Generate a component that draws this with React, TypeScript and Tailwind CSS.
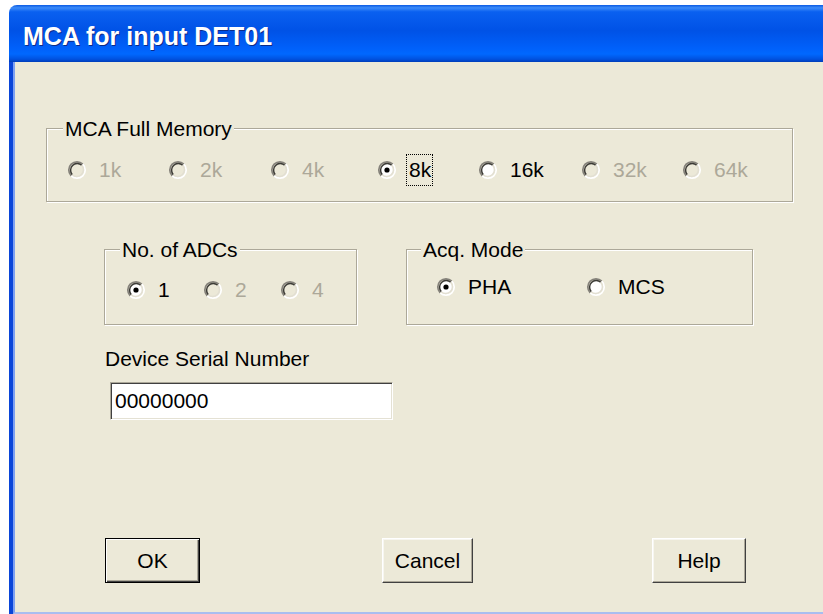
import React from "react";

type Opt = {
  label: string;
  w: string;
  checked?: boolean;
  disabled?: boolean;
  focus?: boolean;
};

// Classic sunken radio: dark bevel on the upper-left, light bevel on the lower-right.
function Radio({ checked = false, disabled = false }: { checked?: boolean; disabled?: boolean }) {
  const fill = disabled ? "#ece9d8" : "#ffffff";
  return (
    <span className="block w-[20px] h-[20px] shrink-0">
      <svg viewBox="0 0 20 20" className="block w-[20px] h-[20px] max-w-none">
        <circle cx="10" cy="10" r="6.6" fill={fill} />
        <path d="M4.2 15.8 A8.2 8.2 0 0 1 15.8 4.2" fill="none" stroke="#85827a" strokeWidth="1.7" />
        <path d="M15.8 4.2 A8.2 8.2 0 0 1 4.2 15.8" fill="none" stroke="#ffffff" strokeWidth="1.7" />
        <path d="M5.27 14.73 A6.7 6.7 0 0 1 14.73 5.27" fill="none" stroke="#3c3b36" strokeWidth="1.5" />
        <path d="M14.73 5.27 A6.7 6.7 0 0 1 5.27 14.73" fill="none" stroke="#e2dfd2" strokeWidth="1.5" />
        {checked && <circle cx="10" cy="10" r="2.6" fill="#000000" />}
      </svg>
    </span>
  );
}

function RadioItem({ o }: { o: Opt }) {
  return (
    <div className={`flex items-center ${o.w}`}>
      <Radio checked={o.checked} disabled={o.disabled} />
      <span
        className={`relative ml-[12px] leading-[24px] ${o.disabled ? "text-[#aca899]" : "text-black"}`}
      >
        {o.label}
        {o.focus && (
          <span className="absolute -left-[3px] -right-[2px] -top-[4px] -bottom-[4px] border border-dotted border-black" />
        )}
      </span>
    </div>
  );
}

function Group({
  label,
  box,
  labelPos,
  row,
  children,
}: {
  label: string;
  box: string;
  labelPos: string;
  row: string;
  children: React.ReactNode;
}) {
  return (
    <div
      className={`relative border border-[#aca899] shadow-[1px_1px_0_#ffffff,inset_1px_1px_0_#ffffff] ${box}`}
    >
      <span className={`absolute top-[-12px] bg-[#ece9d8] px-[2px] leading-[24px] ${labelPos}`}>
        {label}
      </span>
      <div className={`flex ${row}`}>{children}</div>
    </div>
  );
}

const memory: Opt[] = [
  { label: "1k", w: "w-[101px]", disabled: true },
  { label: "2k", w: "w-[102px]", disabled: true },
  { label: "4k", w: "w-[107px]", disabled: true },
  { label: "8k", w: "w-[101px]", checked: true, focus: true },
  { label: "16k", w: "w-[103px]" },
  { label: "32k", w: "w-[101px]", disabled: true },
  { label: "64k", w: "w-[60px]", disabled: true },
];

const adcs: Opt[] = [
  { label: "1", w: "w-[77px]", checked: true },
  { label: "2", w: "w-[77px]", disabled: true },
  { label: "4", w: "w-[40px]", disabled: true },
];

const modes: Opt[] = [
  { label: "PHA", w: "w-[150px]", checked: true },
  { label: "MCS", w: "w-[80px]" },
];

const raised =
  "border border-t-white border-l-white border-r-[#404040] border-b-[#404040] shadow-[inset_-1px_-1px_0_#aca899,inset_1px_1px_0_#f7f6f0]";

export default function App() {
  return (
    <div className="w-[823px] h-[614px] bg-white pt-[5px] pl-[9px] overflow-hidden font-['Liberation_Sans',Arial,sans-serif] text-[21px] text-black">
      <div className="flex flex-col h-[609px] rounded-tl-[8px] overflow-hidden">
        {/* caption bar */}
        <div className="h-[57px] shrink-0 pl-[14px] pt-[16px] bg-[linear-gradient(180deg,#0a5ae4_0%,#3d8cf9_5%,#0a60f0_12%,#0052e6_45%,#0060fa_75%,#0068ff_86%,#0052e0_95%,#003cb8_100%)]">
          <div className="text-[25px] leading-[30px] font-bold text-white [text-shadow:1px_1px_0_#0b2b8a]">
            MCA for input DET01
          </div>
        </div>

        {/* client area */}
        <div className="flex-1 border-l-[4px] border-[#0a45d8]">
          <div className="h-full flex flex-col bg-[#ece9d8] border-l-2 border-b-2 border-l-[#7da0f2] border-b-[#a9bdf0]">
            <Group
              label="MCA Full Memory"
              box="ml-[31px] mt-[66px] w-[747px] h-[74px]"
              labelPos="left-[16px]"
              row="pl-[20px] pt-[29px]"
            >
              {memory.map((o) => (
                <RadioItem key={o.label} o={o} />
              ))}
            </Group>

            <div className="flex mt-[47px]">
              <Group
                label="No. of ADCs"
                box="ml-[89px] w-[253px] h-[76px]"
                labelPos="left-[15px]"
                row="pl-[21px] pt-[28px]"
              >
                {adcs.map((o) => (
                  <RadioItem key={o.label} o={o} />
                ))}
              </Group>
              <Group
                label="Acq. Mode"
                box="ml-[49px] w-[347px] h-[76px]"
                labelPos="left-[14px]"
                row="pl-[29px] pt-[25px]"
              >
                {modes.map((o) => (
                  <RadioItem key={o.label} o={o} />
                ))}
              </Group>
            </div>

            <div className="ml-[90px] mt-[22px] leading-[24px]">Device Serial Number</div>
            <div className="ml-[95px] mt-[11px] w-[283px] h-[38px] bg-white border border-t-[#aca899] border-l-[#aca899] border-r-white border-b-white shadow-[inset_1px_1px_0_#404040,inset_-1px_-1px_0_#e4e1d4] flex items-center pl-[4px]">
              00000000
            </div>

            <div className="flex mt-[118px]">
              <button className="ml-[90px] w-[95px] h-[45px] bg-[#ece9d8] border border-black shadow-[inset_1px_1px_0_#ffffff,inset_-1px_-1px_0_#404040,inset_-2px_-2px_0_#aca899] leading-[24px]">
                OK
              </button>
              <button className={`ml-[182px] w-[91px] h-[45px] bg-[#ece9d8] leading-[24px] ${raised}`}>
                Cancel
              </button>
              <button className={`ml-[179px] w-[94px] h-[45px] bg-[#ece9d8] leading-[24px] ${raised}`}>
                Help
              </button>
            </div>
          </div>
        </div>
      </div>
    </div>
  );
}
